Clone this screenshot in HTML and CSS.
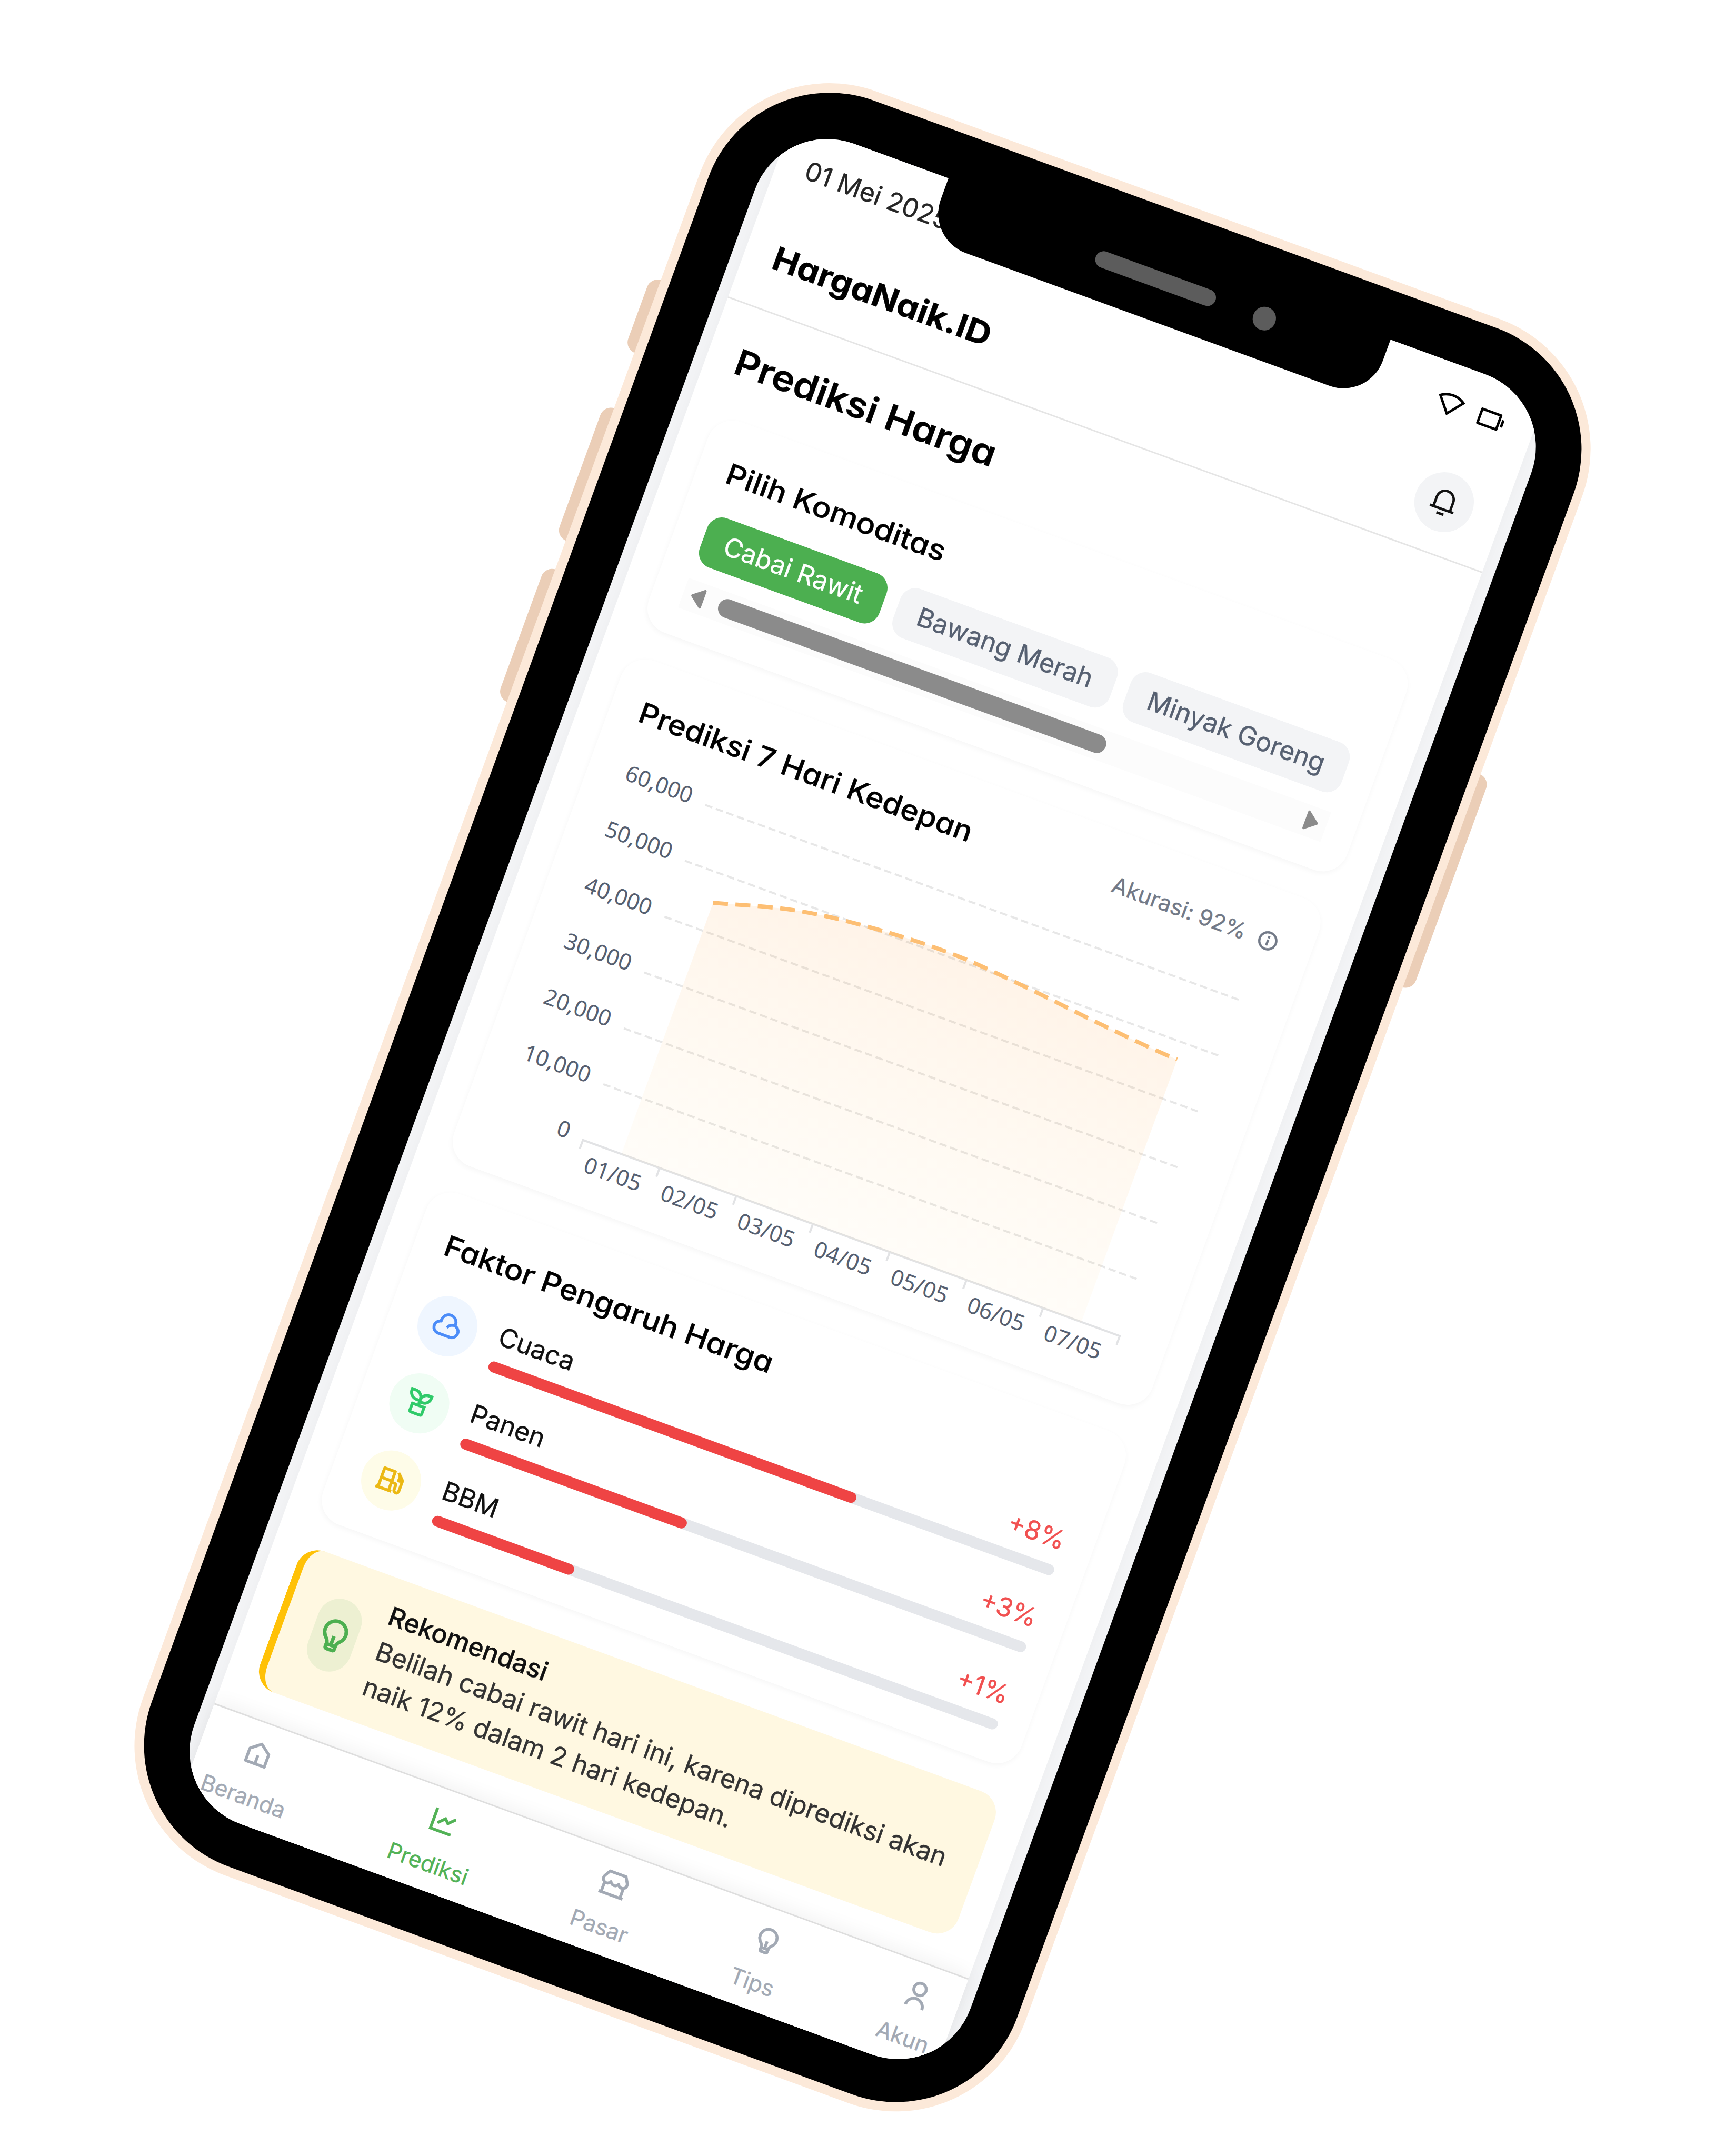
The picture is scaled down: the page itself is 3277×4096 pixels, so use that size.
FILE: index.html
```html
<!DOCTYPE html>
<html lang="id">
<head>
<meta charset="utf-8">
<title>HargaNaik.ID</title>
<link rel="stylesheet" href="styles.css">
</head>
<body>
<div class="phone">
  <span class="side-button mute"></span>
  <span class="side-button volume-up"></span>
  <span class="side-button volume-down"></span>
  <span class="side-button power"></span>
  <div class="frame">
    <div class="bezel">
      <div class="screen">
        <div class="app">
          <div class="status-bar">
            <span>01 Mei 2025</span>
            <div class="status-icons">
              <svg class="icon" viewBox="0 0 24 24"><path d="M12 3c4.284 0 8.22 1.497 11.31 3.996L12 21 .69 6.997A17.917 17.917 0 0 1 12 3zm0 2c-3.028 0-5.923.842-8.42 2.392L12 17.817 20.42 7.39A15.927 15.927 0 0 0 12 5z"/></svg>
              <svg class="icon" viewBox="0 0 24 24"><path d="M4 7v10h14V7H4zM3 5h16a1 1 0 0 1 1 1v12a1 1 0 0 1-1 1H3a1 1 0 0 1-1-1V6a1 1 0 0 1 1-1zm18 4h2v6h-2V9z"/></svg>
            </div>
          </div>
          <header class="header">
            <span class="brand">HargaNaik.ID</span>
            <span class="bell"><svg class="icon" viewBox="0 0 24 24"><path d="M20 17h2v2H2v-2h2v-7a8 8 0 1 1 16 0v7zm-2 0v-7a6 6 0 1 0-12 0v7h12zm-9 4h6v2H9v-2z"/></svg></span>
          </header>
          <main class="main">
            <h1 class="page-title">Prediksi Harga</h1>

            <section class="card commodity">
              <h2 class="card-title t-pilih">Pilih Komoditas</h2>
              <div class="pills">
                <span class="pill active">Cabai Rawit</span>
                <span class="pill">Bawang Merah</span>
                <span class="pill">Minyak Goreng</span>
              </div>
              <div class="scrollbar">
                <svg class="arrow" viewBox="0 0 8 11"><path d="M6.9 .9 1.1 5.5 6.9 10.1Z"/></svg>
                <span class="thumb"></span>
                <svg class="arrow" viewBox="0 0 8 11"><path d="M1.1 .9 6.9 5.5 1.1 10.1Z"/></svg>
              </div>
            </section>

            <section class="card forecast">
              <div class="card-head">
                <h2 class="card-title t-hari">Prediksi 7 Hari Kedepan</h2>
                <div class="accuracy">
                  <span>Akurasi: 92%</span>
                  <svg class="info" viewBox="0 0 24 24"><path d="M12 22C6.477 22 2 17.523 2 12S6.477 2 12 2s10 4.477 10 10-4.477 10-10 10zm0-2a8 8 0 1 0 0-16 8 8 0 0 0 0 16zM11 7h2v2h-2V7zm0 4h2v6h-2v-6z"/></svg>
                </div>
              </div>
              <svg class="chart" viewBox="0 0 366 220">
                <defs>
                  <linearGradient id="area" x1="0" y1="0" x2="0" y2="1">
                    <stop offset="0" stop-color="#ff8c1a" stop-opacity=".1"/>
                    <stop offset="1" stop-color="#ffc04d" stop-opacity=".04"/>
                  </linearGradient>
                </defs>
                <g class="grid-lines">
                  <path d="M50 11.2H356M50 43H356M50 74.9H356M50 106.7H356M50 138.5H356M50 170.4H356"/>
                </g>
                <path class="axis" d="M50 207.2V202.2H356V207.2M93.7 202.2v5M137.4 202.2v5M181.1 202.2v5M224.9 202.2v5M268.6 202.2v5M312.3 202.2v5"/>
                <path fill="url(#area)" d="M71.9 59C86.4 55 101 50.3 115.6 47.5S144.7 43.3 159.3 42.2S188.4 40.5 203 40.8S232.1 42.8 246.7 44.2S275.8 47.6 290.4 49S319.5 52 334.1 52.6V202.2H71.9Z"/>
                <path class="series" d="M71.9 59C86.4 55 101 50.3 115.6 47.5S144.7 43.3 159.3 42.2S188.4 40.5 203 40.8S232.1 42.8 246.7 44.2S275.8 47.6 290.4 49S319.5 52 334.1 52.6"/>
                <g class="labels y">
                  <text x="41.8" y="13.5">60,000</text>
                  <text x="41.8" y="45.3">50,000</text>
                  <text x="41.8" y="77.2">40,000</text>
                  <text x="41.8" y="109">30,000</text>
                  <text x="41.8" y="140.8">20,000</text>
                  <text x="41.8" y="172.7">10,000</text>
                  <text x="41.8" y="204.5">0</text>
                </g>
                <g class="labels x">
                  <text x="71.3" y="218.2">01/05</text>
                  <text x="115" y="218.2">02/05</text>
                  <text x="158.7" y="218.2">03/05</text>
                  <text x="202.4" y="218.2">04/05</text>
                  <text x="246.1" y="218.2">05/05</text>
                  <text x="289.8" y="218.2">06/05</text>
                  <text x="333.5" y="218.2">07/05</text>
                </g>
              </svg>
            </section>

            <section class="card factors">
              <h2 class="card-title t-faktor">Faktor Pengaruh Harga</h2>
              <div class="factor">
                <span class="badge blue"><svg class="icon" viewBox="0 0 24 24"><path d="M17 21H7A6 6 0 0 1 5.008 9.339a7 7 0 1 1 13.984 0A6 6 0 0 1 17 21zm0-12a5 5 0 1 0-9.994.243l.07 1.488-1.404.494A4.002 4.002 0 0 0 7 19h10a4 4 0 1 0-3.796-5.265l-1.898-.633A6.003 6.003 0 0 1 17 9z"/></svg></span>
                <div class="factor-body">
                  <div class="factor-head"><span>Cuaca</span><span class="rise">+8%</span></div>
                  <div class="track"><span class="fill" style="width:65%"></span></div>
                </div>
              </div>
              <div class="factor">
                <span class="badge green"><svg class="icon" viewBox="0 0 24 24"><path d="M6 2a7 7 0 0 1 6.197 3.741A6.49 6.49 0 0 1 17.5 3H21v2.5a6.5 6.5 0 0 1-6.5 6.5H13v1h5v7a2 2 0 0 1-2 2H8a2 2 0 0 1-2-2v-7h5v-2H9a7 7 0 0 1-7-7V2h4zm10 13H8v5h8v-5zm3-10h-1.5A4.5 4.5 0 0 0 13 9.5v.5h1.5A4.5 4.5 0 0 0 19 5.5V5zM6 4H4a5 5 0 0 0 5 5h2a5 5 0 0 0-5-5z"/></svg></span>
                <div class="factor-body">
                  <div class="factor-head"><span>Panen</span><span class="rise">+3%</span></div>
                  <div class="track"><span class="fill" style="width:40%"></span></div>
                </div>
              </div>
              <div class="factor">
                <span class="badge yellow"><svg class="icon" viewBox="0 0 24 24"><path d="M14 19h1v2H2v-2h1V4a1 1 0 0 1 1-1h9a1 1 0 0 1 1 1v8h2a2 2 0 0 1 2 2v4a1 1 0 0 0 2 0v-7h-2a1 1 0 0 1-1-1V6.414l-1.657-1.657 1.414-1.414 4.95 4.95A.997.997 0 0 1 22 9v9a3 3 0 0 1-6 0v-4h-2v5zm-9 0h7v-6H5v6zM5 5v6h7V5H5z"/></svg></span>
                <div class="factor-body">
                  <div class="factor-head"><span>BBM</span><span class="rise">+1%</span></div>
                  <div class="track"><span class="fill" style="width:25%"></span></div>
                </div>
              </div>
            </section>

            <section class="tip">
              <span class="tip-icon"><svg viewBox="0 0 24 24"><path d="M9.973 18H11v-5h2v5h1.027c.132-1.202.745-2.194 1.74-3.277.113-.122.832-.867.917-.973a6 6 0 1 0-9.37-.002c.086.107.807.853.918.974.996 1.084 1.609 2.076 1.741 3.278zM10 20v1h4v-1h-4zm-4.246-5a8 8 0 1 1 12.49.002C17.624 15.774 16 17 16 18.5V21a2 2 0 0 1-2 2h-4a2 2 0 0 1-2-2v-2.5C8 17 6.375 15.774 5.754 15z"/></svg></span>
              <div class="tip-text">
                <strong>Rekomendasi</strong>
                <p>Belilah cabai rawit hari ini, karena diprediksi akan<br>naik 12% dalam 2 hari kedepan.</p>
              </div>
            </section>
          </main>
          <nav class="nav">
            <div class="nav-item"><span class="nav-icon"><svg class="icon" viewBox="0 0 24 24"><path d="M13 19h6V9.978l-7-5.444-7 5.444V19h6v-6h2v6zm8 1a1 1 0 0 1-1 1H4a1 1 0 0 1-1-1V9.49a1 1 0 0 1 .386-.79l8-6.222a1 1 0 0 1 1.228 0l8 6.222a1 1 0 0 1 .386.79V20z"/></svg></span>Beranda</div>
            <div class="nav-item current"><span class="nav-icon"><svg class="icon" viewBox="0 0 24 24"><path d="M5 3v16h16v2H3V3h2zm15.293 3.293 1.414 1.414L16 13.414l-3-2.999-4.293 4.292-1.414-1.414L13 7.586l3 2.999 4.293-4.292z"/></svg></span>Prediksi</div>
            <div class="nav-item"><span class="nav-icon"><svg class="icon" viewBox="0 0 24 24"><path d="M21 13.242V20h1v2H2v-2h1v-6.758A4.496 4.496 0 0 1 1 9.5c0-.827.224-1.624.633-2.303L4.345 2.5a1 1 0 0 1 .866-.5H18.79a1 1 0 0 1 .866.5l2.702 4.682A4.496 4.496 0 0 1 21 13.242zm-2 .73a4.496 4.496 0 0 1-3.75-1.36A4.496 4.496 0 0 1 12 14.001a4.496 4.496 0 0 1-3.25-1.387A4.496 4.496 0 0 1 5 13.973V20h14v-6.027zM5.789 4L3.356 8.213a2.5 2.5 0 1 0 4.466 2.216c.335-.837 1.52-.837 1.856 0a2.5 2.5 0 0 0 4.644 0c.335-.837 1.52-.837 1.856 0a2.5 2.5 0 1 0 4.457-2.232L18.21 4H5.79z"/></svg></span>Pasar</div>
            <div class="nav-item"><span class="nav-icon"><svg class="icon" viewBox="0 0 24 24"><path d="M9.973 18H11v-5h2v5h1.027c.132-1.202.745-2.194 1.74-3.277.113-.122.832-.867.917-.973a6 6 0 1 0-9.37-.002c.086.107.807.853.918.974.996 1.084 1.609 2.076 1.741 3.278zM10 20v1h4v-1h-4zm-4.246-5a8 8 0 1 1 12.49.002C17.624 15.774 16 17 16 18.5V21a2 2 0 0 1-2 2h-4a2 2 0 0 1-2-2v-2.5C8 17 6.375 15.774 5.754 15z"/></svg></span>Tips</div>
            <div class="nav-item"><span class="nav-icon"><svg class="icon" viewBox="0 0 24 24"><path d="M4 22a8 8 0 1 1 16 0h-2a6 6 0 1 0-12 0H4zm8-9c-3.315 0-6-2.685-6-6s2.685-6 6-6 6 2.685 6 6-2.685 6-6 6zm0-2c2.21 0 4-1.79 4-4s-1.79-4-4-4-4 1.79-4 4 1.79 4 4 4z"/></svg></span>Akun</div>
          </nav>
        </div>
      </div>
      <div class="notch">
        <span class="speaker"></span>
        <span class="camera"></span>
      </div>
    </div>
  </div>
</div>
</body>
</html>
```

FILE: styles.css
```css
/* 1rem equals ten app pixels */
html {
  font-size: 35.479px;
}

* {
  box-sizing: border-box;
}

body {
  margin: 0;
  width: 3277px;
  height: 4096px;
  overflow: hidden;
  position: relative;
  background: #fff;
  font-family: Inter, "Liberation Sans", sans-serif;
  color: #111;
}

h1, h2, p {
  margin: 0;
}

svg {
  display: block;
  fill: currentColor;
}

.icon {
  width: 1.6rem;
  height: 1.6rem;
  stroke: currentColor;
  stroke-width: .35;
}

/* ---------- device ---------- */

.phone {
  position: absolute;
  left: 1418.7px;
  top: 84.4px;
  width: 50.32rem;
  height: 101.7rem;
  transform-origin: 0 0;
  transform: rotate(20.06deg);
}

.frame {
  position: relative;
  height: 100%;
  padding: .5rem;
  border-radius: 7.39rem;
  background: #fce9d9;
}

.bezel {
  position: relative;
  height: 100%;
  padding: 2.54rem 2.5rem 2.37rem 2.58rem;
  border-radius: 6.9rem;
  background: #000;
}

.screen {
  height: 100%;
  padding: 0 .6rem;
  overflow: hidden;
  border-radius: 4.13rem;
  background: #f3f4f6;
}

.side-button {
  position: absolute;
  left: -.56rem;
  width: 1.8rem;
  border-radius: .6rem;
  background: #ebceb7;
}

.mute { top: 13.45rem; height: 4.15rem; }
.volume-up { top: 20.74rem; height: 7.56rem; }
.volume-down { top: 29.93rem; height: 7.56rem; }
.power { left: auto; right: -.53rem; top: 23.26rem; height: 12.14rem; }

.notch {
  position: absolute;
  top: 2.3rem;
  left: 12.11rem;
  width: 25.19rem;
  height: 3.67rem;
  padding: .87rem 0 1.55rem 8.85rem;
  display: flex;
  align-items: center;
  gap: 2.17rem;
  border-radius: 0 0 2.24rem 2.24rem;
  background: #000;
}

.speaker {
  width: 6.81rem;
  height: .9rem;
  border-radius: .45rem;
  background: #5c5c5c;
}

.camera {
  width: 1.25rem;
  height: 1.25rem;
  border-radius: 50%;
  background: #5c5c5c;
}

/* ---------- app ---------- */

.app {
  width: 43rem;
  height: 95.85rem;
  margin-top: -.02rem;
  display: flex;
  flex-direction: column;
  background: #fff;
  box-shadow: 0 0 .8rem rgba(0, 0, 0, .03);
  -webkit-text-stroke: .012rem currentColor;
}

.status-bar {
  height: 4.4rem;
  padding: 1.2rem 1.6rem;
  display: flex;
  justify-content: space-between;
  align-items: center;
  font-size: 1.4rem;
  line-height: 2rem;
  color: #262626;
}

.status-icons {
  display: flex;
  gap: .7rem;
  color: #000;
}

.status-icons .icon {
  stroke: none;
}

.header {
  height: 5.7rem;
  padding: 1.2rem 1.6rem;
  display: flex;
  justify-content: space-between;
  align-items: center;
  border-bottom: .1rem solid #e5e5e5;
}

/* wide geometric headings with a single-storey a */
.brand, .page-title, .card-title {
  align-self: flex-start;
  width: max-content;
  font-feature-settings: "cv11" 1;
  color: #000;
  white-space: nowrap;
  transform-origin: 0 50%;
}

.brand {
  align-self: center;
  font-size: 1.73rem;
  line-height: 2.8rem;
  font-weight: 700;
  transform: scaleX(1.08);
}

.bell {
  width: 3.2rem;
  height: 3.2rem;
  display: grid;
  place-items: center;
  border-radius: 50%;
  background: #f3f4f6;
}

.bell .icon {
  stroke: none;
}

.main {
  flex: none;
  padding: 1.6rem;
  display: flex;
  flex-direction: column;
  gap: 1.6rem;
}

.page-title {
  font-size: 1.92rem;
  line-height: 2.8rem;
  font-weight: 600;
  transform: scaleX(1.08);
}

.card {
  padding: 1.6rem;
  border-radius: 1.4rem;
  background: #fff;
  box-shadow: 0 .1rem .3rem rgba(0, 0, 0, .04);
}

.card-title {
  font-size: 1.54rem;
  line-height: 2.4rem;
  font-weight: 500;
}

.t-pilih { transform: scaleX(1.095); }
.t-hari { transform: scaleX(1.07); }
.t-faktor { transform: scaleX(1.081); }

/* commodity picker */

.commodity {
  height: 12rem;
}

.pills {
  margin-top: 1.08rem;
  display: flex;
  gap: .8rem;
  overflow: hidden;
}

.pill {
  flex: none;
  padding: .42rem 1.2rem;
  border-radius: .85rem;
  font-size: 1.4rem;
  line-height: 2rem;
  white-space: nowrap;
  color: #566071;
  background: #f3f4f6;
}

.pill.active {
  color: #fff;
  background: #4caf50;
}

.scrollbar {
  height: 1.68rem;
  margin-top: .87rem;
  padding: 0 .4rem;
  display: flex;
  align-items: center;
  background: #fcfcfc;
}

.arrow {
  width: .8rem;
  height: 1.1rem;
  overflow: visible;
  fill: #8b8b8b;
  stroke: #8b8b8b;
  stroke-width: 1.3;
  stroke-linejoin: round;
}

.thumb {
  width: 22.08rem;
  height: 1.02rem;
  margin: 0 auto 0 .8rem;
  border-radius: .51rem;
  background: #8b8b8b;
}

/* forecast */

.card-head {
  display: flex;
  justify-content: space-between;
  align-items: center;
}

.accuracy {
  padding-right: .2rem;
  display: flex;
  align-items: center;
  gap: .65rem;
  font-size: 1.2rem;
  line-height: 1.6rem;
  color: #727987;
}

.info {
  width: 1.22rem;
  height: 1.22rem;
  stroke: currentColor;
  stroke-width: .4;
}

.chart {
  width: 36.6rem;
  height: 22rem;
  margin-top: 1.2rem;
}

.grid-lines {
  fill: none;
  stroke: #e7e7e7;
  stroke-width: 1.1;
  stroke-dasharray: 4 2;
}

.axis {
  fill: none;
  stroke: #e2e3e5;
  stroke-width: 1.1;
}

.series {
  fill: none;
  stroke: #fdbf74;
  stroke-width: 2.2;
  stroke-dasharray: 8 4;
}

.labels {
  font: 12px "Noto Sans", "Open Sans", sans-serif;
  fill: #566071;
  -webkit-text-stroke: 0;
}

.labels.y { text-anchor: end; }
.labels.x { text-anchor: middle; }

/* factors */

.factors {
  display: flex;
  flex-direction: column;
  gap: 1.2rem;
}

.t-faktor {
  margin-bottom: .06rem;
}

.factor {
  display: flex;
  align-items: center;
  gap: 1.2rem;
}

.badge {
  flex: none;
  width: 3.2rem;
  height: 3.2rem;
  display: grid;
  place-items: center;
  border-radius: 50%;
}

.blue { background: #eff6ff; color: #4b8cf8; }
.green { background: #f0fdf4; color: #2fca69; }
.yellow { background: #fefce8; color: #ebb813; }

.factor-body {
  flex: 1;
}

.factor-head {
  display: flex;
  justify-content: space-between;
  font-size: 1.4rem;
  line-height: 2rem;
}

.rise {
  color: #f15050;
}

.track {
  height: .6rem;
  margin-top: .4rem;
  border-radius: .3rem;
  background: #e5e7eb;
}

.fill {
  display: block;
  height: 100%;
  border-radius: .3rem;
  background: #ef4444;
}

/* recommendation */

.tip {
  height: 8.04rem;
  padding: 0 1.6rem;
  display: flex;
  align-items: center;
  gap: 1.2rem;
  border-left: .4rem solid #ffc107;
  border-radius: 1.2rem;
  background: #fff8e1;
}

.tip-icon {
  flex: none;
  width: 2.4rem;
  height: 4rem;
  display: grid;
  place-items: center;
  border-radius: 1.2rem;
  color: #4caf50;
  background: rgba(76, 175, 80, .1);
}

.tip-icon svg {
  width: 2rem;
  height: 2rem;
  stroke: currentColor;
  stroke-width: .3;
}

.tip-text {
  font-size: 1.4rem;
  line-height: 2rem;
  white-space: nowrap;
  color: #333;
}

.tip-text strong {
  display: block;
  font-weight: 500;
  color: #111;
}

/* bottom navigation */

.nav {
  position: relative;
  flex: 1;
  padding: .5rem .8rem 0;
  display: flex;
  justify-content: space-between;
  align-items: flex-start;
  border-top: .1rem solid #dedede;
  background: #fff;
  box-shadow: 0 -.2rem 1rem rgba(0, 0, 0, .05);
}

.nav-item {
  display: flex;
  flex-direction: column;
  align-items: center;
  gap: .4rem;
  font-size: 1.2rem;
  line-height: 1.6rem;
  color: #a2a9b4;
}

.nav-item.current {
  color: #52b256;
}

.nav-icon {
  width: 2.4rem;
  height: 2.4rem;
  display: grid;
  place-items: center;
}
```
